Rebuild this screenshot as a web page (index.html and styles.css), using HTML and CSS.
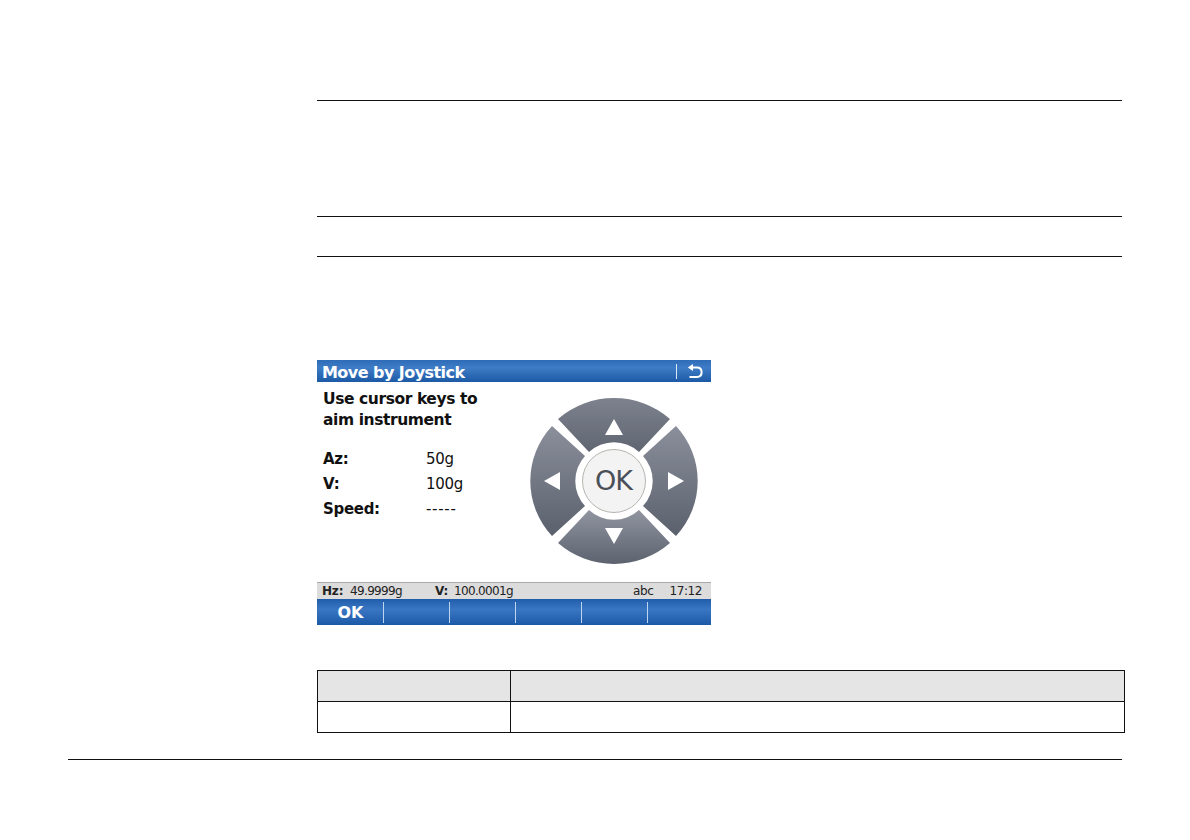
FILE: index.html
```html
<!DOCTYPE html>
<html lang="en">
<head>
<meta charset="utf-8">
<title>Move by Joystick</title>
<link rel="stylesheet" href="styles.css">
</head>
<body>
<main class="content">
  <div class="rule first"></div>
  <div class="rule second"></div>
  <div class="rule third"></div>
  <section class="screen">
    <header class="titlebar">
      <span class="title">Move by Joystick</span>
      <span class="title-sep"></span>
      <svg class="back" width="16" height="14" viewBox="0 0 16 14"><path d="M3 3.5H10C13 3.5 14.6 5.5 14.6 8.2C14.6 11 12.8 12.9 10 12.9H2.5" fill="none" stroke="#fff" stroke-width="2"/><path d="M6 0V7L0.8 3.5Z" fill="#fff"/></svg>
    </header>
    <div class="panel">
      <div class="info">
        <p class="prompt">Use cursor keys to<br>aim instrument</p>
        <dl class="values">
          <dt>Az:</dt><dd>50g</dd>
          <dt>V:</dt><dd>100g</dd>
          <dt>Speed:</dt><dd class="dashes">-----</dd>
        </dl>
      </div>
      <svg class="dpad" width="170" height="170" viewBox="-85 -85 170 170">
        <defs>
          <linearGradient id="gt" x1="0" y1="0" x2="0" y2="1"><stop offset="0" stop-color="#7d828e"/><stop offset="1" stop-color="#5f6571"/></linearGradient>
          <linearGradient id="gb" x1="0" y1="0" x2="0" y2="1"><stop offset="0" stop-color="#9095a0"/><stop offset="1" stop-color="#5c626e"/></linearGradient>
          <linearGradient id="gs" x1="0" y1="0" x2="0" y2="1"><stop offset="0" stop-color="#8a8f9b"/><stop offset="1" stop-color="#5a606c"/></linearGradient>
        </defs>
        <path d="M-56 -62A84 82 0 0 1 56 -62L25 -29A37 37 0 0 0 -25 -29Z" fill="url(#gt)"/>
        <path d="M-56 62A84 82 0 0 0 56 62L25 29A37 37 0 0 1 -25 29Z" fill="url(#gb)"/>
        <path d="M-62 -55A84 82 0 0 0 -62 55L-29 25A37 37 0 0 1 -29 -25Z" fill="url(#gs)"/>
        <path d="M62 -55A84 82 0 0 1 62 55L29 25A37 37 0 0 0 29 -25Z" fill="url(#gs)"/>
        <path d="M0 -62L9 -46H-9Z" fill="#fff"/>
        <path d="M0 63L9 47H-9Z" fill="#fff"/>
        <path d="M-70 0L-54 -9V9Z" fill="#fff"/>
        <path d="M70 0L54 -9V9Z" fill="#fff"/>
        <circle r="31.5" fill="#f3f3f3" stroke="#b5b5b0" stroke-width="1"/>
      </svg>
      <span class="ok-label">OK</span>
    </div>
    <div class="status">
      <span class="st-hz"><b class="st-label">Hz:</b>49.9999g</span>
      <span class="st-v"><b class="st-label">V:</b>100.0001g</span>
      <span class="st-abc">abc</span>
      <span class="st-time">17:12</span>
    </div>
    <nav class="softkeys">
      <span class="key">OK</span><span class="key"></span><span class="key"></span><span class="key"></span><span class="key"></span><span class="key"></span>
    </nav>
  </section>
  <div class="table">
    <div class="cell head"></div><div class="cell head"></div>
    <div class="cell"></div><div class="cell"></div>
  </div>
</main>
<footer class="foot"></footer>
</body>
</html>
```
FILE: styles.css
```css
html, body { margin: 0; padding: 0; background: #fff; }
body { width: 1190px; height: 840px; overflow: hidden; font-family: "DejaVu Sans", sans-serif; color: #111; }
.content { margin-left: 317px; width: 805px; padding-top: 100px; }
.rule { height: 1px; background: #111; }
.first { margin-bottom: 115px; }
.second { margin-bottom: 39px; }
.third { margin-bottom: 103px; }
.screen { width: 394px; height: 265px; display: flex; flex-direction: column; }
.titlebar { height: 22px; display: flex; align-items: center; padding-left: 5px; color: #fff; background: linear-gradient(#2f6cb8, #3f7cc6 35%, #1c5aa6); }
.title { font-size: 16px; line-height: 25px; height: 22px; font-weight: 700; flex: 1; letter-spacing: -0.55px; }
.title-sep { width: 1px; height: 15px; background: #dbe8f5; margin-right: 10px; }
.back { margin-right: 8px; }
.panel { flex: 1; position: relative; display: flex; justify-content: space-between; padding: 0 13px 0 6px; }
.prompt { margin: 7px 0 16px; font-size: 15.5px; line-height: 21px; font-weight: 700; letter-spacing: -0.42px; }
.values { margin: 0; display: grid; grid-template-columns: 103px auto; font-size: 15px; line-height: 25px; }
.values dt { font-weight: 700; letter-spacing: -0.3px; }
.values dd { margin: 0; letter-spacing: -0.3px; }
.values .dashes { letter-spacing: 0.7px; }
.dpad { margin-top: 14px; margin-right: -1px; }
.ok-label { position: absolute; left: 278px; top: 83px; font-size: 27px; line-height: 32px; color: #4a4f58; letter-spacing: -1px; }
.status { height: 16px; display: flex; align-items: center; background: #dcdcdc; border-top: 1px solid #a9a9a9; font-size: 12px; color: #222; padding-left: 5px; letter-spacing: -0.65px; }
.st-label { font-weight: 700; letter-spacing: -0.2px; }
.st-hz { width: 113px; display: flex; }
.st-hz .st-label { width: 28px; }
.st-v { flex: 1; display: flex; }
.st-v .st-label { width: 19px; }
.st-abc { margin-right: 16px; letter-spacing: -0.4px; }
.st-time { margin-right: 9px; letter-spacing: -0.4px; }
.softkeys { height: 26px; display: flex; background: linear-gradient(#1f5dab, #3a76c2 40%, #1b5aa8); }
.key { flex: 0 0 66px; color: #fff; font-weight: 700; font-size: 16px; line-height: 27px; text-align: center; background: linear-gradient(#bcd6f0, #bcd6f0) right center / 1px 21px no-repeat; }
.key:first-child { flex-basis: 67px; }
.key:last-child { flex: 1; background: none; }
.table { margin-top: 45px; width: 808px; height: 63px; box-sizing: border-box; border: solid #111; border-width: 1px 1px 0 1px; display: grid; grid-template-columns: 193px 1fr; grid-template-rows: 31px 31px; }
.cell { border-bottom: 1px solid #111; }
.cell:nth-child(odd) { border-right: 1px solid #111; }
.head { background: #e5e5e5; }
.foot { margin: 26px 0 0 68px; width: 1054px; height: 1px; background: #111; }
```
